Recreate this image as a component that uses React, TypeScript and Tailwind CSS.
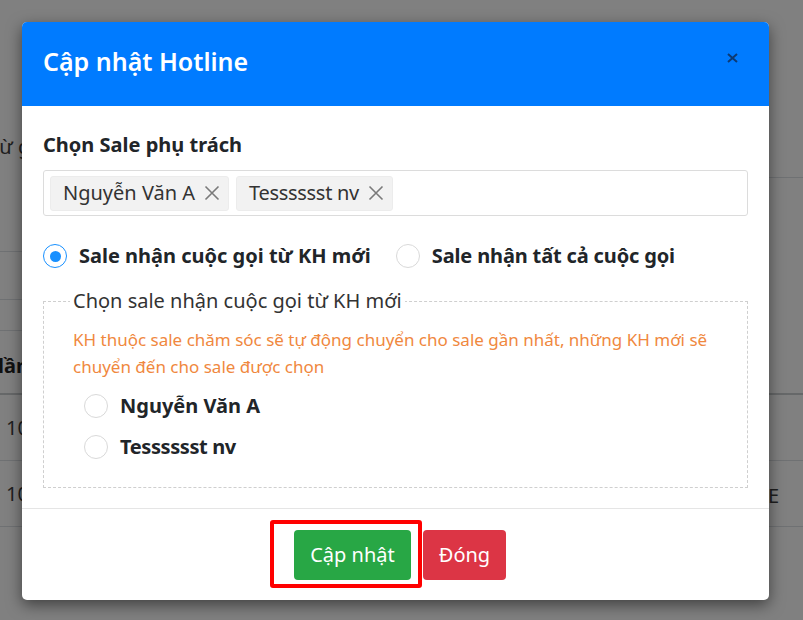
import React from "react";

function TagX() {
  return (
    <svg width="16" height="16" viewBox="0 0 16 16" className="shrink-0">
      <path d="M1.5 1.5 L14.5 14.5 M14.5 1.5 L1.5 14.5" stroke="#7a7a7a" strokeWidth="1.6" fill="none" />
    </svg>
  );
}

function Radio({ checked }: { checked?: boolean }) {
  return checked ? (
    <span className="w-[24px] h-[24px] rounded-full border-[1.5px] border-[#1890ff] bg-white flex items-center justify-center shrink-0">
      <span className="w-[11px] h-[11px] rounded-full bg-[#1890ff]" />
    </span>
  ) : (
    <span className="w-[24px] h-[24px] rounded-full border border-[#d9d9d9] bg-white shrink-0" />
  );
}

export default function App() {
  return (
    <div
      className="relative w-[803px] h-[620px] overflow-hidden bg-[#808080] text-[#212529]"
      style={{ fontFamily: '"Noto Sans", "Open Sans", sans-serif' }}
    >
      {/* underlying page (dimmed) */}
      <div className="flex flex-col w-full h-full">
        <div className="flex h-[331px]">
          <div className="w-[400px] flex flex-col">
            <div className="h-[252px] border-b border-[#6f7173] pt-[132px] text-[20px] text-[#1e1e1e] leading-[30px] -ml-[8px]">
              từ g
            </div>
            <div className="h-[48px] border-b border-[#6f7173]" />
            <div className="h-[31px] border-b border-[#6f7173]" />
          </div>
          <div className="flex-1 flex flex-col">
            <div className="h-[178px] border-b border-[#6f7173] flex justify-end items-end pb-[12px]">
              <span className="text-[20px] text-[#4a2a20] leading-[30px] -mr-[12px]">T</span>
            </div>
            <div className="flex-1" />
          </div>
        </div>
        <div className="h-[64px] border-b-2 border-[#666869] flex items-center">
          <span className="font-bold text-[20px] text-[#111] -ml-[2px] pt-[8px]">lần</span>
        </div>
        <div className="h-[66px] border-b border-[#6f7173] flex items-center">
          <span className="text-[20px] text-[#1e1e1e] ml-[6px]">10</span>
        </div>
        <div className="h-[66px] border-b border-[#6f7173] flex items-center justify-between">
          <span className="text-[20px] text-[#1e1e1e] ml-[6px]">10</span>
          <span className="text-[20px] text-[#1e1e1e] mr-[24px] pt-[4px]">E</span>
        </div>
      </div>

      {/* modal overlay */}
      <div className="absolute inset-0 pt-[22px] pl-[22px]">
        <div className="w-[747px] bg-white rounded-[5px] overflow-hidden shadow-[0_5px_15px_rgba(0,0,0,0.5)]">
          {/* header */}
          <div className="h-[84px] bg-[#007bff] flex items-center justify-between pl-[21px] pr-[31px]">
            <div className="text-white font-semibold text-[25px] leading-[30px] -mt-[6px]">Cập nhật Hotline</div>
            <svg width="11" height="10" viewBox="0 0 11 10" className="-mt-[12px]">
              <path d="M1 1 L10 9 M10 1 L1 9" stroke="#0d3a73" strokeWidth="2" fill="none" />
            </svg>
          </div>

          {/* body */}
          <div className="px-[21px] pt-[24px] pb-[20px] border-b border-[#e5e5e5]">
            <div className="font-bold text-[20px] leading-[30px] text-[#212529]">Chọn Sale phụ trách</div>
            <div className="mt-[10px] h-[46px] border border-[#dcdcdc] rounded-[3px] flex items-center gap-[7px] pl-[6px]">
              <div className="h-[35px] bg-[#f2f2f2] border border-[#ececec] rounded-[3px] flex items-center pl-[12px] pr-[8px] gap-[9px]">
                <span className="text-[20px] text-[#333]">Nguyễn Văn A</span>
                <TagX />
              </div>
              <div className="h-[35px] bg-[#f2f2f2] border border-[#ececec] rounded-[3px] flex items-center pl-[12px] pr-[8px] gap-[9px]">
                <span className="text-[20px] text-[#333] tracking-[-0.3px]">Tesssssst nv</span>
                <TagX />
              </div>
            </div>

            <div className="mt-[25px] flex items-center h-[30px]">
              <label className="flex items-center gap-[12px]">
                <Radio checked />
                <span className="font-bold text-[20px] text-[#212529]">Sale nhận cuộc gọi từ KH mới</span>
              </label>
              <label className="flex items-center gap-[12px] ml-[25px]">
                <Radio />
                <span className="font-bold text-[20px] text-[#212529] tracking-[-0.15px]">Sale nhận tất cả cuộc gọi</span>
              </label>
            </div>

            <fieldset className="mt-[15px] border border-dashed border-[#cfcfcf] pl-[29px] pr-[20px] pb-[25px]">
              <legend className="-ml-[3px] px-[3px] text-[20px] leading-[30px] text-[#333]">
                Chọn sale nhận cuộc gọi từ KH mới
              </legend>
              <div className="mt-[10px] text-[17px] leading-[27px] text-[#f0883e]">
                KH thuộc sale chăm sóc sẽ tự động chuyển cho sale gần nhất, những KH mới sẽ chuyển đến cho sale được chọn
              </div>
              <div className="mt-[11px] pl-[11px] flex flex-col gap-[11px]">
                <label className="flex items-center gap-[12px] h-[30px]">
                  <Radio />
                  <span className="font-bold text-[20px] text-[#212529]">Nguyễn Văn A</span>
                </label>
                <label className="flex items-center gap-[12px] h-[30px]">
                  <Radio />
                  <span className="font-bold text-[20px] text-[#212529] tracking-[-0.4px]">Tesssssst nv</span>
                </label>
              </div>
            </fieldset>
          </div>

          {/* footer */}
          <div className="flex justify-center items-center gap-[12px] pl-[9px] pt-[21px] pb-[20px]">
            <div className="relative">
              <button className="w-[117px] h-[50px] rounded-[4px] bg-[#28a745] text-white text-[20px]">Cập nhật</button>
              <div className="absolute -left-[24px] -top-[10px] -right-[11px] -bottom-[8px] border-[4px] border-[#ff0000] rounded-[3px] pointer-events-none" />
            </div>
            <button className="w-[83px] h-[50px] rounded-[4px] bg-[#dc3545] text-white text-[20px]">Đóng</button>
          </div>
        </div>
      </div>
    </div>
  );
}
